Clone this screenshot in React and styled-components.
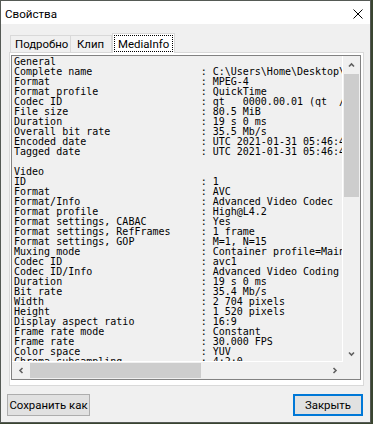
import React from "react";
import styled, { createGlobalStyle } from "styled-components";

const Global = createGlobalStyle`
  html, body { margin: 0; padding: 0; background: #3a4530; }
  body { width: 373px; height: 424px; overflow: hidden; }
  * { box-sizing: border-box; }
`;

const UI_FONT = `"Segoe UI", Roboto, "Noto Sans", sans-serif`;

const Window = styled.div`
  width: 371px;
  height: 423px;
  border: 1px solid #555a55;
  background: #f0f0f0;
  display: flex;
  flex-direction: column;
  font-family: ${UI_FONT};
  font-size: 11.4px;
  color: #000;
`;

const TitleBar = styled.div`
  height: 23px;
  flex: none;
  background: #ffffff;
  display: flex;
  align-items: center;
  justify-content: space-between;
  padding: 3px 7px 0 4px;
`;

const Title = styled.span`
  font-size: 11.6px;
  line-height: 16px;
`;

const Body = styled.div`
  flex: 1;
  display: flex;
  flex-direction: column;
  padding: 9px 6px 6px 6px;
`;

const TabRow = styled.div`
  display: flex;
  align-items: flex-end;
  height: 20px;
  margin: 0 0 -1px 3px;
  position: relative;
  z-index: 1;
`;

const Tab = styled.div`
  width: ${(p) => p.$w}px;
  height: ${(p) => (p.$active ? 20 : 17)}px;
  margin-bottom: ${(p) => (p.$active ? 0 : 1)}px;
  background: ${(p) => (p.$active ? "#ffffff" : "#f0f0f0")};
  border: 1px solid #d9d9d9;
  border-bottom: none;
  border-left-width: ${(p) => (p.$noLeft ? 0 : 1)}px;
  display: flex;
  align-items: stretch;
  padding: ${(p) => (p.$active ? "1px 1px 1px 1px" : `0 0 0 ${p.$pl}px`)};
  line-height: 16px;
  white-space: nowrap;
`;

const TabLabel = styled.span`
  display: flex;
  align-items: center;
  flex: 1;
  padding-left: ${(p) => (p.$focus ? 4 : 0)}px;
  outline: ${(p) => (p.$focus ? "1px dotted #000" : "none")};
  outline-offset: -1px;
`;

const Panel = styled.div`
  height: 334px;
  margin-left: 2px;
  border: 1px solid #d9d9d9;
  background: #ffffff;
  padding: 2px 2px 5px 1px;
`;

const TextBox = styled.div`
  width: 350px;
  height: 325px;
  border: 1px solid #828282;
  background: #f0f0f0;
  display: grid;
  grid-template-columns: 1fr 17px;
  grid-template-rows: 1fr 17px;
`;

const TextArea = styled.div`
  overflow: hidden;
  padding: 1px 0 0 2px;
  border-right: 1px solid #ffffff;
  border-bottom: 1px solid #ffffff;
`;

const Line = styled.div`
  font-family: "DejaVu Sans Mono", "Liberation Mono", monospace;
  font-size: 10px;
  line-height: 10px;
  height: 10px;
  white-space: pre;
  color: #000;
`;

const VScroll = styled.div`
  display: flex;
  flex-direction: column;
  background: #f0f0f0;
`;

const HScroll = styled.div`
  display: flex;
  flex-direction: row;
  background: #f0f0f0;
`;

const Arrow = styled.div`
  width: 17px;
  height: 17px;
  flex: none;
  display: flex;
  align-items: center;
  justify-content: center;
`;

const VThumb = styled.div`
  height: 123px;
  margin: 1px 1px 0 1px;
  background: #cdcdcd;
`;

const HThumb = styled.div`
  width: 171px;
  margin: 1px 0 1px 1px;
  background: #cdcdcd;
`;

const Spacer = styled.div`
  flex: 1;
`;

const Corner = styled.div`
  background: #f0f0f0;
`;

const ButtonRow = styled.div`
  display: flex;
  justify-content: space-between;
  margin: 8px 1px 0 0;
`;

const Button = styled.button`
  height: 22px;
  width: ${(p) => p.$w}px;
  padding: 0;
  background: #e1e1e1;
  border: ${(p) => (p.$default ? "2px solid #0078d7" : "1px solid #adadad")};
  font-family: ${UI_FONT};
  font-size: 11.4px;
  color: #000;
  line-height: 16px;
  white-space: nowrap;
`;

const Chevron = ({ dir }) => {
  const pts = {
    up: "1,4.5 3.5,2 6,4.5",
    down: "1,1.5 3.5,4 6,1.5",
    left: "4.5,1 2,3.5 4.5,6",
    right: "1.5,1 4,3.5 1.5,6",
  }[dir];
  const horiz = dir === "left" || dir === "right";
  return (
    <svg width={horiz ? 6 : 7} height={horiz ? 7 : 6} viewBox={horiz ? "0 0 6 7" : "0 0 7 6"}>
      <polyline points={pts} fill="none" stroke="#606060" strokeWidth="1.6" />
    </svg>
  );
};

const CloseIcon = () => (
  <svg width="10" height="10" viewBox="0 0 10 10">
    <path d="M0.5 0.5 L9.5 9.5 M9.5 0.5 L0.5 9.5" stroke="#000" strokeWidth="1" fill="none" />
  </svg>
);

const rows = [
  "General",
  ["Complete name", "C:\\Users\\Home\\Desktop\\GH010023.MP4"],
  ["Format", "MPEG-4"],
  ["Format profile", "QuickTime"],
  ["Codec ID", "qt   0000.00.01 (qt  /mp41)"],
  ["File size", "80.5 MiB"],
  ["Duration", "19 s 0 ms"],
  ["Overall bit rate", "35.5 Mb/s"],
  ["Encoded date", "UTC 2021-01-31 05:46:40"],
  ["Tagged date", "UTC 2021-01-31 05:46:40"],
  "",
  "Video",
  ["ID", "1"],
  ["Format", "AVC"],
  ["Format/Info", "Advanced Video Codec"],
  ["Format profile", "High@L4.2"],
  ["Format settings, CABAC", "Yes"],
  ["Format settings, RefFrames", "1 frame"],
  ["Format settings, GOP", "M=1, N=15"],
  ["Muxing mode", "Container profile=Main@4.2"],
  ["Codec ID", "avc1"],
  ["Codec ID/Info", "Advanced Video Coding"],
  ["Duration", "19 s 0 ms"],
  ["Bit rate", "35.4 Mb/s"],
  ["Width", "2 704 pixels"],
  ["Height", "1 520 pixels"],
  ["Display aspect ratio", "16:9"],
  ["Frame rate mode", "Constant"],
  ["Frame rate", "30.000 FPS"],
  ["Color space", "YUV"],
  ["Chroma subsampling", "4:2:0"],
  ["Bit depth", "8 bits"],
];

const fmt = (r) => (Array.isArray(r) ? r[0].padEnd(31, " ") + ": " + r[1] : r || " ");

export default function App() {
  return (
    <>
      <Global />
      <Window>
        <TitleBar>
          <Title>Свойства</Title>
          <CloseIcon />
        </TitleBar>
        <Body>
          <TabRow>
            <Tab $w={61} $pl={4}>Подробно</Tab>
            <Tab $w={41} $pl={6} $noLeft>Клип</Tab>
            <Tab $w={63} $active>
              <TabLabel $focus>MediaInfo</TabLabel>
            </Tab>
          </TabRow>
          <Panel>
            <TextBox>
              <TextArea>
                {rows.map((r, i) => (
                  <Line key={i}>{fmt(r)}</Line>
                ))}
              </TextArea>
              <VScroll>
                <Arrow><Chevron dir="up" /></Arrow>
                <VThumb />
                <Spacer />
                <Arrow><Chevron dir="down" /></Arrow>
              </VScroll>
              <HScroll>
                <Arrow><Chevron dir="left" /></Arrow>
                <HThumb />
                <Spacer />
                <Arrow><Chevron dir="right" /></Arrow>
              </HScroll>
              <Corner />
            </TextBox>
          </Panel>
          <ButtonRow>
            <Button $w={83}>Сохранить как</Button>
            <Button $w={70} $default>Закрыть</Button>
          </ButtonRow>
        </Body>
      </Window>
    </>
  );
}
